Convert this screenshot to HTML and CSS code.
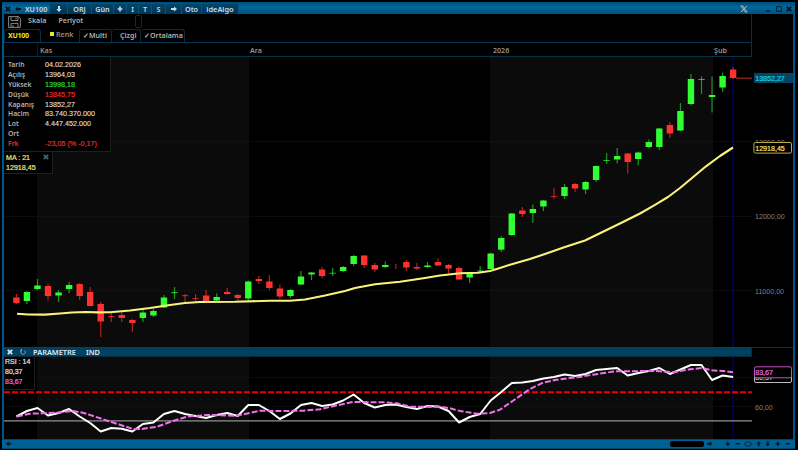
FILE: index.html
```html
<!DOCTYPE html>
<html lang="tr">
<head>
<meta charset="utf-8">
<title>XU100</title>
<link rel="stylesheet" href="styles.css">
</head>
<body>
<svg class="defs" width="0" height="0">
  <symbol id="cross" viewBox="0 0 6 6"><path d="M.8 .8L5.2 5.2M5.2 .8L.8 5.2" stroke="currentColor" stroke-width="1.7"/></symbol>
  <symbol id="arrow" viewBox="0 0 6 6"><path d="M0 2H3V.4L6 3L3 5.6V4H0Z" fill="currentColor"/></symbol>
  <symbol id="plus" viewBox="0 0 6 6"><path d="M3 .6V5.4M.6 3H5.4" stroke="currentColor" stroke-width="1.6"/></symbol>
  <symbol id="minus" viewBox="0 0 6 6"><path d="M.6 3H5.4" stroke="currentColor" stroke-width="1.5"/></symbol>
</svg>
<div class="window">
  <header class="title">
    <svg class="ic dark"><use href="#cross"/></svg>
    <svg class="ic dark flip"><use href="#arrow"/></svg>
    <span>XU100</span>
    <b class="btn"><svg class="ic down"><use href="#arrow"/></svg></b>
    <b class="btn">ORJ</b>
    <b class="btn">Gün</b>
    <b class="btn"><svg class="ic"><use href="#plus"/></svg></b>
    <b class="btn">I</b>
    <b class="btn">T</b>
    <b class="btn">S</b>
    <b class="btn"><svg class="ic"><use href="#arrow"/></svg></b>
    <b class="btn">Oto</b>
    <b class="btn algo">ideAlgo</b>
    <i></i>
    <svg class="pin" viewBox="0 0 8 8"><path d="M.8 .8H2.7L7.2 7.2H5.3Z" fill="#6f8795" stroke="#b5c0c6" stroke-width=".7"/><path d="M7 .8L1 7.2" stroke="#b5c0c6"/></svg>
    <svg class="ic dark"><path d="M1 5H5" stroke="currentColor" stroke-width="1.3"/></svg>
    <svg class="ic dark"><rect x=".7" y=".7" width="4.6" height="4.6" fill="none" stroke="currentColor" stroke-width=".8"/></svg>
    <svg class="ic dark"><use href="#cross"/></svg>
  </header>
  <div class="body">
    <main class="left">
      <div class="tools">
        <svg class="save" viewBox="0 0 13 12"><path d="M.6 .6H10.5L12.4 2.4V11.4H.6Z" fill="none" stroke="#858585"/><path d="M3 .6V4.5H10V.6M3 11.4V7.4H10V11.4" fill="none" stroke="#858585" stroke-width="1"/><path d="M8 1.5V3.6M5 9.2V11" stroke="#858585"/></svg>
        <span>Skala</span><span>Periyot</span><i class="slot"></i>
      </div>
      <nav class="tabs">
        <span class="tab active">XU100</span>
        <span class="plain"><i></i>Renk</span>
        <span class="tab">✓Multi</span>
        <span class="tab cizgi">Çizgi</span>
        <span class="tab">✓Ortalama</span>
      </nav>
      <div class="dates"><span>Kas</span><span>Ara</span><span>2026</span><span>Şub</span></div>
      <section class="price">
        <svg id="price" viewBox="4 57 748 290"></svg>
        <div class="info">
          <span>Tarih</span><b>04.02.2026</b>
          <span>Açılış</span><b>13964,03</b>
          <span>Yüksek</span><b class="up">13998,18</b>
          <span>Düşük</span><b class="dn">13845,75</b>
          <span>Kapanış</span><b>13852,27</b>
          <span>Hacim</span><b>83.740.370.000</b>
          <span>Lot</span><b>4.447.452.000</b>
          <span>Ort</span><b></b>
          <span class="dn">Frk</span><b class="dn">-23,05 (% -0,17)</b>
        </div>
        <div class="ma"><span>MA : 21</span><svg class="ic"><use href="#cross"/></svg><span>12918,45</span></div>
      </section>
      <div class="indbar"><svg class="ic"><use href="#cross"/></svg><svg class="ic" viewBox="0 0 6 6"><path d="M1.4 1.3A2.3 2.3 0 1 0 4.8 1.6M1.5 0V1.8H0" fill="none" stroke="currentColor" stroke-width=".8"/></svg><span>PARAMETRE</span><span>IND</span></div>
      <section class="rsi">
        <svg id="rsi" viewBox="4 357 748 82"></svg>
        <div class="rsibox"><span>RSI : 14</span><span>80,37</span><span class="pink">83,67</span></div>
      </section>
    </main>
    <aside class="axis">
      <svg viewBox="752 14 41 425">
        <path d="M752 347.5H793" stroke="#07304a"/>
        <g class="ticks"><text x="755" y="144.5">13000,00</text><text x="755" y="219">12000,00</text><text x="755" y="293.5">11000,00</text><text x="755" y="409.5">60,00</text></g>
        <rect x="754" y="73" width="39" height="10" fill="#064363"/>
        <text x="755.2" y="80.8" fill="#10d4e4" stroke="#10d4e4">13852,27</text>
        <rect x="753.9" y="142.5" width="37.6" height="10.6" rx="1.5" fill="#000" stroke="#b8b04c"/>
        <text x="755.2" y="150.6" fill="#f0e878" stroke="#f0e878">12918,45</text>
        <rect x="754.5" y="372" width="37" height="10.5" rx="1.5" fill="#000" stroke="#bdbdbd"/>
        <text x="755.2" y="380.2" fill="#ddd">80,37</text>
        <rect x="754.5" y="366.8" width="37" height="11" rx="1.5" fill="#000" stroke="#c050c4"/>
        <text x="755.2" y="374.8" fill="#ee6cf0" stroke="#ee6cf0">83,67</text>
      </svg>
    </aside>
  </div>
  <footer class="foot">
    <svg class="ic flip"><use href="#arrow"/></svg><i></i><span class="thumb"></span>
    <svg class="ic"><use href="#arrow"/></svg>
    <svg class="ic"><use href="#plus"/></svg>
    <svg class="ic"><use href="#minus"/></svg>
    <svg class="oval" viewBox="0 0 8 6"><ellipse cx="4" cy="3" rx="3.3" ry="2.2" fill="none" stroke="#062335" stroke-width=".9"/></svg>
    <svg class="ic up2"><use href="#arrow"/></svg>
    <svg class="ic down"><use href="#arrow"/></svg>
    <svg class="ic"><use href="#plus"/></svg>
    <svg class="ic"><use href="#minus"/></svg>
  </footer>
</div>
<script src="chart.js"></script>
</body>
</html>
```
FILE: styles.css
```css
* { box-sizing: border-box; }
body { margin: 0; width: 798px; height: 450px; background: #000; overflow: hidden; font: 600 7.1px/10px "Noto Sans", "Open Sans", sans-serif; color: #b0b0b0; }
svg { display: block; }
.defs { position: absolute; }
.window { height: 450px; padding: 2px 3px 1px 2px; display: flex; flex-direction: column; }
.title { height: 12px; display: grid; align-items: center; grid-template-columns: 10px 10px 25px 18px 24px 22px 13px 12px 13px 14px 16px 20px 37px 1fr 24px 11px 10px 9px; padding: 1px 0 0 3px; background: linear-gradient(#004b75, #0069a0 45%, #004f7a); color: #cbdbe4; font-size: 7.2px; }
.btn { font-weight: 600; height: 10px; display: flex; align-items: center; justify-content: center; background: linear-gradient(#00466c, #003452); border-right: 1px solid #075581; }
.algo { font-size: 7.4px; }
.ic { width: 6px; height: 6px; }
.dark { color: #001019; }
.flip { transform: scaleX(-1); }
.down { transform: rotate(90deg); }
.up2 { transform: rotate(-90deg); }
.pin { width: 8px; height: 8px; margin-left: -1px; }
.body { height: 425px; display: flex; border-left: 2px solid #005486; border-right: 2px solid #005486; }
.left { width: 748px; border-right: 1px solid #062d43; }
.axis { flex: 1; }
.axis svg { width: 100%; height: 425px; }
.axis text { font: 7.1px "Liberation Sans", sans-serif; stroke-width: .2; }
.axis .ticks { fill: #808080; }
.tools { height: 15px; display: flex; align-items: center; padding: 0 0 2px 4px; }
.save { width: 13px; height: 12px; margin: 2px 7px 0 0; }
.tools span { margin-top: -1px; }
.tools span + span { margin-left: 12px; }
.slot { width: 7px; height: 13px; border: 1px solid #242424; border-radius: 2px; margin: 2px 0 0 52px; }
.tabs { height: 14px; display: flex; align-items: center; border-bottom: 1px solid #063650; }
.tab { height: 13px; padding: 0 2px 0 3px; border: 1px solid #062c43; border-bottom: 0; border-radius: 3px 3px 0 0; white-space: nowrap; }
.active { width: 37px; color: #e8e800; font-weight: 700; letter-spacing: -.3px; }
.plain { width: 38px; padding-left: 9px; margin-top: -3px; display: flex; align-items: center; gap: 2px; color: #909090; }
.plain i { width: 4px; height: 4px; background: #e8e82c; }
.tab:nth-child(3) { width: 33px; }
.cizgi { width: 29px; padding-left: 8px; border-left: 0; }
.tab:nth-child(5) { width: 44px; border-left: 0; }
.dates { height: 14px; display: grid; grid-template-columns: 210px 243px 221px 1fr; align-items: center; padding-left: 36px; border-bottom: 1px solid #063045; color: #929292; box-shadow: inset 33px 0 #000, inset 34px 0 #041c2a; }
.price { height: 290px; position: relative; }
.price > svg { width: 748px; height: 290px; }
.info { position: absolute; left: 0; top: 0; width: 107px; height: 95px; padding: 3px 0 0 4px; background: #000; border: solid #1f1f1f; border-width: 0 1px 1px 0; display: grid; grid-template-columns: 37px 1fr; grid-auto-rows: 9.88px; font-size: 6.8px; }
.info b { font: 7.2px/10px "Liberation Sans", sans-serif; color: #dedede; white-space: nowrap; -webkit-text-stroke: .15px currentColor; }
.info .up { color: #2be32b; }
.info .dn { color: #ec3030; }
.ma { position: absolute; left: 0; top: 95px; width: 49px; height: 22px; padding: 1px 0 0 2px; background: #000; border: solid #1f1f1f; border-width: 0 1px 1px 0; display: grid; grid-template-columns: 37px 8px; align-items: center; color: #f2ea78; font: 7.1px/9px "Liberation Sans", sans-serif; -webkit-text-stroke: .2px currentColor; }
.ma .ic { color: #456878; margin-top: -3px; }
.indbar { height: 10px; display: flex; align-items: center; padding-left: 3px; background: #02405f; border-bottom: 1px solid #042b40; color: #e0eaf0; font-size: 7.4px; }
.indbar .ic + .ic { margin: 0 7px; color: #a3b5bf; }
.indbar span + span { margin-left: 10px; }
.rsi { height: 82px; position: relative; }
.rsi > svg { width: 748px; height: 82px; }
.rsibox { position: absolute; left: 0; top: 0; width: 31px; height: 33px; background: #000; border: solid #1f1f1f; border-width: 0 1px 1px 0; padding-left: 1px; display: flex; flex-direction: column; font: 7px/9.9px "Liberation Sans", sans-serif; color: #e4e4e4; -webkit-text-stroke: .2px currentColor; }
.rsibox .pink { color: #ee6cf0; }
.foot { height: 10px; background: #006197; border: solid #00476f; border-width: 1px 0; display: grid; align-items: center; grid-template-columns: 6px 1fr 37px 18px 10px 9px 12px 9px 10px 10px 9px; padding: 0 1px 0 4px; color: #001825; }
.foot .ic { width: 5.5px; height: 5.5px; }
.thumb { width: 34px; height: 6px; border-radius: 2px; background: #000; }
.oval { width: 8px; height: 6px; }
```
FILE: chart.js
```javascript
// One entry per session: [direction, high, body top, body bottom, low]
const candles = [
  "R 294 297.5 303 304","G 291 292 301 304","G 279 285.5 289 290","R 284 286 296 300.5","G 290 292.5 295.5 302",
  "G 282 285 289 293","R 283 284 296 300","R 287 292 306 306","R 302 304 321.5 337","R 313 316 317.2 322",
  "R 312 315 318 322","R 319 320 323 332","G 308 312.5 318 322","G 309 311 315.5 317","G 295 297.5 307.5 308",
  "G 287 292 293.2 299","R 294 295 296.2 302","R 294 298 299 303","R 290 295.5 301 301","G 293.5 297 300.5 301",
  "R 288 292 294 295","R 293.5 295 298 300","G 280.5 281.5 298.5 301","R 276 279 281 284","R 275 281.5 288 290",
  "R 284.5 288.5 296.5 299","G 289 290 296 298","G 271 276.5 284.5 285","G 272 272.5 274.5 280","R 267 269.5 276 278",
  "G 268 272.7 273.7 276","G 266 267 271 272","G 255 256 264 266","R 255.5 255.5 265 268","R 263 265 269.5 272",
  "G 261.5 265 267 268","R 264 266 266 269","R 260 262 267.5 271","R 263 267 268.5 270","G 262 265.5 267 268",
  "R 258.5 262 265.5 266","R 264 265 268.5 273.5","R 266.5 268 279.5 280","G 272 272.5 277.5 283","G 266 270.5 271.5 273",
  "G 253 253.5 269 269","G 236 238 249.7 252","G 213 213.5 235 236","R 207 210.5 214 217","G 204.5 209 213 223",
  "G 200 200.5 206.5 211","R 188 196 197 199","G 184 187 196 199","R 183 184 188.5 192","G 181 182 189.5 194",
  "G 165.5 166 180 182","G 153 160 161 164","G 148 156 159.5 163.5","R 153 153.5 162 173.5","G 151.5 152.5 159 165.5",
  "G 139.5 142 147 148","G 128 128.5 147 150","R 122 125 133.5 138","G 103 111 130.5 131","G 74 79 104 105.5",
  "G 76.5 79 80 94","G 76.5 95 97 112.5","G 72.5 76 87.5 92","R 67 69.5 78 79"
];
const average = "17,313.7 28,314.5 45,314.6 60,313.5 72,312.5 85,312 98,312.4 110,312.3 130,310.5 150,308 170,305 185,303 200,302 235,301.8 270,300.7 290,300.8 305,299.5 325,295.5 345,291 355,288 375,284.3 400,281.7 425,278 440,275.5 460,273.3 478,272.8 490,271 500,268 510,264.7 530,259 545,254 565,247 585,240.5 603,231.8 622,222.5 640,213.5 655,204.8 668,197 680,188 692,178 706,166.3 720,156 733,147.5";
const rsi = [416.5,411,408,415.5,413,409,416.5,423,431.5,428,428.7,431.5,424,422.5,414,411,414,416,418,415,413,416,405,405,411,419,413.5,405,403,406,404.5,400.5,394.5,403,407.5,405,404.5,407,409,406,406.5,411,422.5,417,414,400.5,392,383,382.5,381,378.5,377,374.5,376,374,370,369,368,375.5,373,371,368,374,369.5,365,365,380,375.5,377];
const signal = "17,416.5 30,413.7 57,412.7 72,411 83,412.7 100,418.3 113,422.5 133,429 142,429 157,426.7 173,421 187,416.7 207,415 237,415.7 260,410.7 280,411 303,410.7 320,409.3 337,405.3 353,402 383,402.3 397,403.3 410,406.7 440,406.7 450,408.3 460,411 477,413.7 490,413 500,409.7 513,400.7 530,389 543,382.7 555,380 577,377.3 593,374.7 615,371.3 657,371 673,372.3 690,369.3 702,368 712,370.3 723,371 733,372.3";

const x = i => 16.4 + i * 10.54;
const bands = (y, h) => `<rect x="4" y="${y}" width="748" height="${h}" fill="#000"/><path d="M37 ${y}h212v${h}h-212zM490 ${y}h223v${h}h-223z" fill="#0b0b0b"/>`;
const cursor = (y, h) => `<rect x="732.3" y="${y}" width="1.5" height="${h}" fill="#000066"/>`;
const grid = ys => ys.map(y => `<path d="M4 ${y}H752" stroke="#171717" stroke-dasharray="1 1"/>`).join("");

const bars = candles.map((row, i) => {
  const [dir, ...v] = row.split(" ");
  const [hi, top, bottom, lo] = v.map(Number);
  const [fill, wick] = dir === "G" ? ["#32ff32", "#1e981e"] : ["#ff3232", "#b52020"];
  const body = bottom > top ? `<rect x="${x(i) - 3.2}" y="${top}" width="6.4" height="${bottom - top}" fill="${fill}" opacity="${bottom - top < 1.5 ? .7 : 1}"/>` : "";
  return `<path d="M${x(i)} ${hi}V${lo}" stroke="${wick}" stroke-width="1.2"/>${body}`;
}).join("");

document.getElementById("price").innerHTML = bands(57, 290) + grid([141.5, 216.5, 290.5]) + cursor(57, 290) + bars +
  `<path d="M736 78.2H752" stroke="#a82424" stroke-width="1.2"/>` +
  `<polyline points="${average}" fill="none" stroke="#fbf27c" stroke-width="2.1" stroke-linejoin="round"/>`;

document.getElementById("rsi").innerHTML = bands(357, 82) + grid([377.5, 406.5]) + cursor(357, 82) +
  `<path d="M4 420.8H752" stroke="#929292" stroke-width="1.3"/>` +
  `<path d="M4 392.2H752" stroke="#f00000" stroke-width="2.1" stroke-dasharray="6 2"/>` +
  `<polyline points="${rsi.map((y, i) => x(i) + "," + y).join(" ")}" fill="none" stroke="#fff" stroke-width="2" stroke-linejoin="round"/>` +
  `<polyline points="${signal}" fill="none" stroke="#f070ee" stroke-width="2" stroke-dasharray="6 2"/>`;
```
